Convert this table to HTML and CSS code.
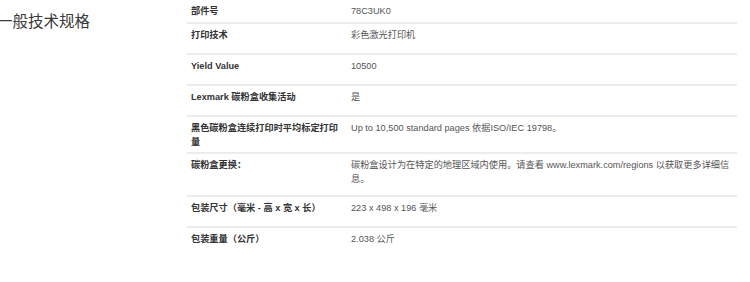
FILE: index.html
```html
<!DOCTYPE html>
<html lang="zh-CN">
<head>
<meta charset="utf-8">
<link rel="stylesheet" href="styles.css">
</head>
<body>
<div class="spec">
  <h2 class="spec-title">一般技术规格</h2>
  <table class="spec-table">
    <colgroup><col class="col-label"><col class="col-value"></colgroup>
    <tbody>
      <tr class="row-first"><th>部件号</th><td><p>78C3UK0</p></td></tr>
      <tr><th>打印技术</th><td><p>彩色激光打印机</p></td></tr>
      <tr><th>Yield Value</th><td><p>10500</p></td></tr>
      <tr><th>Lexmark 碳粉盒收集活动</th><td><p>是</p></td></tr>
      <tr><th>黑色碳粉盒连续打印时平均标定打印量</th><td><p>Up to 10,500 standard pages 依据ISO/IEC 19798。</p></td></tr>
      <tr class="row-tight"><th>碳粉盒更换：</th><td><p>碳粉盒设计为在特定的地理区域内使用。请查看 www.lexmark.com/regions 以获取更多详细信息。</p></td></tr>
      <tr><th>包装尺寸（毫米 - 高 x 宽 x 长）</th><td><p>223 x 498 x 196 毫米</p></td></tr>
      <tr><th>包装重量（公斤）</th><td><p>2.038 公斤</p></td></tr>
    </tbody>
  </table>
</div>
</body>
</html>
```
FILE: styles.css
```css
html, body {
  margin: 0;
  padding: 0;
  background: #fff;
}

body {
  font-family: "Liberation Sans", "Noto Sans CJK SC", sans-serif;
  overflow: hidden;
}

.spec {
  display: flex;
  align-items: flex-start;
}

.spec-title {
  flex: 0 0 190px;
  margin: 11px 0 0 -3px;
  font-family: "Noto Sans CJK SC", sans-serif;
  font-weight: 400;
  font-size: 15.5px;
  line-height: 18px;
  color: #3a3a3a;
}

.spec-table {
  flex: 0 0 550px;
  width: 550px;
  margin-top: -2px;
  border-collapse: collapse;
  table-layout: fixed;
  font-size: 9.2px;
  line-height: 14px;
}

.col-label { width: 164px; }
.col-value { width: 386px; }

.spec-table tr {
  border-top: 2px solid #ececec;
}

.spec-table th,
.spec-table td {
  vertical-align: top;
  text-align: left;
  padding: 4px 0 3px 4px;
}

.spec-table th {
  font-weight: 700;
  color: #333;
  padding-right: 8px;
}

.spec-table td {
  color: #555;
  padding-left: 0;
}

.spec-table td p {
  margin: 0 0 8px;
}

.spec-table .row-first td p {
  margin-bottom: 1px;
}

.spec-table .row-tight td p {
  margin-bottom: 6px;
}
```
